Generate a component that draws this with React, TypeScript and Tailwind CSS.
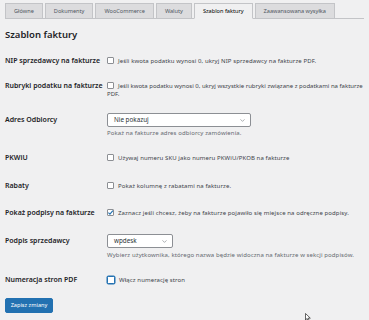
import { ChevronDown } from "lucide-react";

const tabs = ["Główne", "Dokumenty", "WooCommerce", "Waluty", "Szablon faktury", "Zaawansowana wysyłka"];
const active = "Szablon faktury";

function Checkbox({ checked = false, focused = false }: { checked?: boolean; focused?: boolean }) {
  if (focused) {
    return (
      <span className="inline-block align-[-2px] w-[8px] h-[8px] mr-[4px] rounded-[1.5px] border border-[#2271b1] bg-white shadow-[0_0_0_0.5px_#2271b1]" />
    );
  }
  return (
    <span className="relative inline-block align-[-1px] w-[7px] h-[7px] mr-[4px] rounded-[1px] border border-[#8c8f94] bg-white">
      {checked && (
        <svg viewBox="0 0 10 10" className="absolute -left-[1px] -top-[1px] w-[7px] h-[7px]">
          <path d="M2 5.2 L4.2 7.4 L8.4 2.4" fill="none" stroke="#2271b1" strokeWidth="1.6" />
        </svg>
      )}
    </span>
  );
}

function Label({ children, className = "" }: { children: React.ReactNode; className?: string }) {
  return <div className={`w-[102px] shrink-0 text-[7px] font-semibold text-[#1d2327] ${className}`}>{children}</div>;
}

function Select({ value, width }: { value: string; width: string }) {
  return (
    <div
      className={`flex items-center justify-between h-[14px] ${width} rounded-[2px] border border-[#8c8f94] bg-white pl-[6px] pr-[4px] text-[6.3px] text-[#2c3338]`}
    >
      <span>{value}</span>
      <ChevronDown size={7} strokeWidth={1.6} className="text-[#50575e]" />
    </div>
  );
}

export default function App() {
  return (
    <div className="relative w-[369px] h-[320px] overflow-hidden bg-[#f0f0f1] px-[5px] font-['Noto_Sans',sans-serif]">
      {/* zakładki */}
      <div className="flex items-end gap-[2px] pt-[3px] border-b border-[#c3c4c7]">
        {tabs.map((t) => (
          <div
            key={t}
            className={`h-[16px] px-[8px] -mb-px flex items-center text-[5.6px] border border-[#c3c4c7] ${
              t === active ? "bg-[#f0f0f1] border-b-[#f0f0f1] text-[#000]" : "bg-[#dcdcde] text-[#50575e]"
            }`}
          >
            {t}
          </div>
        ))}
      </div>

      <h2 className="mt-[11px] text-[9.5px] leading-[10px] font-semibold text-[#1d2327]">Szablon faktury</h2>

      <div className="flex mt-[17px] leading-[8px]">
        <Label>NIP sprzedawcy na fakturze</Label>
        <div className="text-[6px] tracking-[0.1px] text-[#3c434a]">
          <Checkbox />
          Jeśli kwota podatku wynosi 0, ukryj NIP sprzedawcy na fakturze PDF.
        </div>
      </div>

      <div className="flex mt-[17px] leading-[7.5px]">
        <Label>Rubryki podatku na fakturze</Label>
        <div className="whitespace-nowrap text-[6px] text-[#3c434a]">
          <Checkbox />
          Jeśli kwota podatku wynosi 0, ukryj wszystkie rubryki związane z podatkami na fakturze
          <br />
          PDF.
        </div>
      </div>

      <div className="flex mt-[15px]">
        <Label className="leading-[14px]">Adres Odbiorcy</Label>
        <div>
          <Select value="Nie pokazuj" width="w-[144px]" />
          <div className="mt-[2px] leading-[8px] text-[6px] tracking-[0.1px] text-[#646970]">
            Pokaż na fakturze adres odbiorcy zamówienia.
          </div>
        </div>
      </div>

      <div className="flex mt-[17px] leading-[8px]">
        <Label>PKWiU</Label>
        <div className="text-[6px] tracking-[0.1px] text-[#3c434a]">
          <Checkbox />
          Używaj numeru SKU jako numeru PKWiU/PKOB na fakturze
        </div>
      </div>

      <div className="flex mt-[20px] leading-[8px]">
        <Label>Rabaty</Label>
        <div className="text-[6px] tracking-[0.1px] text-[#3c434a]">
          <Checkbox />
          Pokaż kolumnę z rabatami na fakturze.
        </div>
      </div>

      <div className="flex mt-[19px] leading-[8px]">
        <Label>Pokaż podpisy na fakturze</Label>
        <div className="text-[6px] tracking-[0.1px] text-[#3c434a]">
          <Checkbox checked />
          Zaznacz jeśli chcesz, żeby na fakturze pojawiło się miejsce na odręczne podpisy.
        </div>
      </div>

      <div className="flex mt-[17px]">
        <Label className="leading-[14px]">Podpis sprzedawcy</Label>
        <div>
          <Select value="wpdesk" width="w-[66px]" />
          <div className="mt-[3px] leading-[8px] text-[6px] tracking-[0.1px] text-[#646970]">
            Wybierz użytkownika, którego nazwa będzie widoczna na fakturze w sekcji podpisów.
          </div>
        </div>
      </div>

      <div className="flex mt-[17px] leading-[8px]">
        <Label>Numeracja stron PDF</Label>
        <div className="text-[6px] tracking-[0.1px] text-[#3c434a]">
          <Checkbox focused />
          Włącz numerację stron
        </div>
      </div>

      <button className="mt-[14px] h-[15px] w-[48px] rounded-[2px] bg-[#2271b1] border border-[#2271b1] text-[5.6px] leading-none text-white">
        Zapisz zmiany
      </button>

      {/* kursor */}
      <svg viewBox="0 0 12 18" className="absolute left-[305px] top-[313px] w-[6px] h-[9px]">
        <path d="M1 1 L1 14 L4.2 11 L6.6 16.5 L8.6 15.6 L6.3 10.3 L10.6 10.3 Z" fill="#fff" stroke="#000" strokeWidth="1.2" />
      </svg>
    </div>
  );
}
